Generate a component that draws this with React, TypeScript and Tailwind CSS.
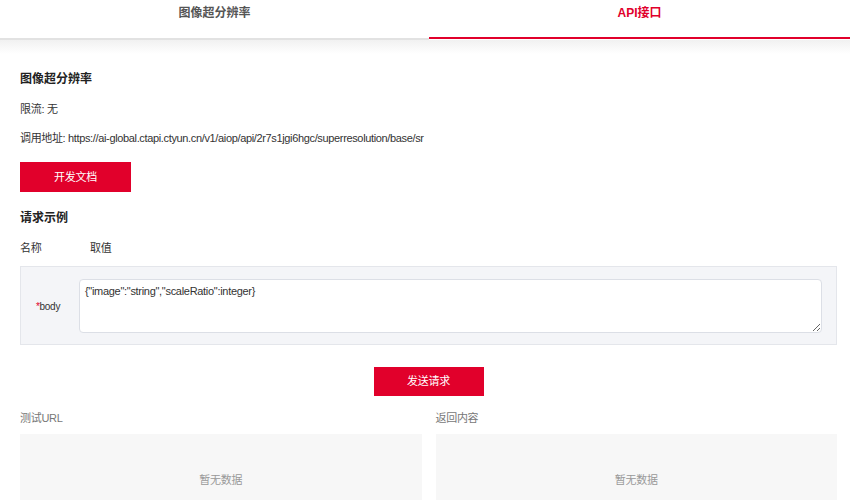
import React from "react";

const font = { fontFamily: '"Liberation Sans", Arial, "Noto Sans CJK SC", sans-serif' };

export default function App() {
  return (
    <div className="w-[850px] h-[500px] overflow-hidden bg-white text-[11px] tracking-[-0.3px] text-[#333]" style={font}>
      <div className="flex items-start h-[40px] tracking-normal">
        <div className="w-[429px] h-[40px] border-b-2 border-[#e2e2e2] pt-[5px] text-center leading-[16px] font-bold text-[12px] text-[#555]">
          图像超分辨率
        </div>
        <div className="flex-1 h-[39px] border-b-2 border-[#e1002b] pt-[5px] text-center leading-[16px] font-bold text-[12px] text-[#e1002b]">
          API接口
        </div>
      </div>
      <div className="h-[14px] bg-gradient-to-b from-[#f1f1f1] to-white" />
      <div className="pl-5 pr-[13px]">
        <div className="mt-[17px] leading-[16px] font-bold text-[12px] tracking-normal text-[#222]">图像超分辨率</div>
        <div className="mt-[14px] leading-[16px]">限流: 无</div>
        <div className="mt-[13px] leading-[16px] tracking-[-0.35px]">
          调用地址: https://ai-global.ctapi.ctyun.cn/v1/aiop/api/2r7s1jgi6hgc/superresolution/base/sr
        </div>
        <button className="mt-[16px] block w-[111px] h-[30px] bg-[#e1002b] text-white text-[11px]">开发文档</button>
        <div className="mt-[18px] leading-[16px] font-bold text-[12px] tracking-normal text-[#222]">请求示例</div>
        <div className="mt-[14px] leading-[16px] flex">
          <span className="w-[70px]">名称</span>
          <span>取值</span>
        </div>
        <div className="mt-[10px] h-[79px] border border-[#e4e6eb] bg-[#f4f5f8] flex items-start pt-[12px] pr-[14px]">
          <div className="w-[58px] h-[54px] flex items-center pl-[15px] text-[10px] text-[#333]">
            <span className="text-[#e1002b]">*</span>body
          </div>
          <textarea
            className="flex-1 h-[54px] rounded-[4px] border border-[#dcdfe6] bg-white px-[5px] py-[3px] text-[11px] tracking-[-0.3px] leading-[16px] text-[#333] outline-none"
            style={font}
            defaultValue={'{"image":"string","scaleRatio":integer}'}
          />
        </div>
        <div className="mt-[22px] flex justify-center">
          <button className="w-[110px] h-[29px] bg-[#e1002b] text-white text-[11px]">发送请求</button>
        </div>
        <div className="mt-[14px] grid grid-cols-2 gap-[14px]">
          <div>
            <div className="leading-[16px] text-[#777]">测试URL</div>
            <div className="mt-[8px] h-[92px] bg-[#f7f7f7] flex items-center justify-center text-[#999]">暂无数据</div>
          </div>
          <div>
            <div className="leading-[16px] text-[#777]">返回内容</div>
            <div className="mt-[8px] h-[92px] bg-[#f7f7f7] flex items-center justify-center text-[#999]">暂无数据</div>
          </div>
        </div>
      </div>
    </div>
  );
}
